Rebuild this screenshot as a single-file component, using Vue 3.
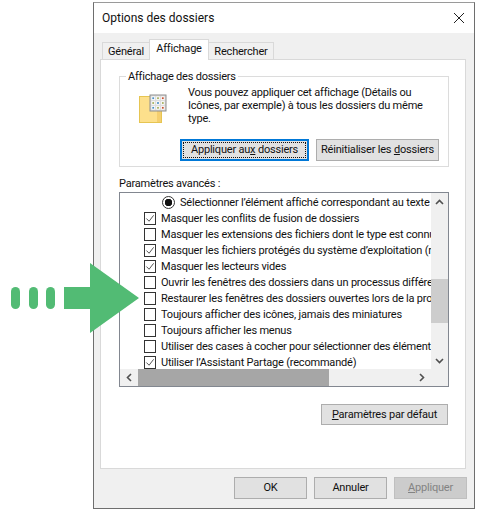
<script setup>
const rows = [
  { kind: 'radio', text: "Sélectionner l’élément affiché correspondant au texte tapé" },
  { checked: true, text: 'Masquer les conflits de fusion de dossiers' },
  { checked: false, text: 'Masquer les extensions des fichiers dont le type est connu' },
  { checked: true, text: 'Masquer les fichiers protégés du système d’exploitation (recommandé)' },
  { checked: true, text: 'Masquer les lecteurs vides' },
  { checked: false, text: 'Ouvrir les fenêtres des dossiers dans un processus différent' },
  { checked: false, text: 'Restaurer les fenêtres des dossiers ouvertes lors de la prochaine ouverture' },
  { checked: false, text: 'Toujours afficher des icônes, jamais des miniatures' },
  { checked: false, text: 'Toujours afficher les menus' },
  { checked: false, text: 'Utiliser des cases à cocher pour sélectionner des éléments' },
  { checked: true, text: 'Utiliser l’Assistant Partage (recommandé)' },
]
const cells = ['#4a90c8', '#a8b060', '#c85030', '#a8b060', '#4a90c8', '#a8b060', '#4a90c8', '#a8b060', '#c85030']
</script>

<template>
  <div class="page">
    <section class="dialog">
      <header class="title">
        <span>Options des dossiers</span>
        <svg class="close" width="12" height="12" viewBox="0 0 12 12"><path d="M1 1l10 10M11 1L1 11" stroke="#222" stroke-width="1" fill="none" /></svg>
      </header>
      <div class="body">
        <nav class="tabs">
          <span class="tab t1">Général</span>
          <span class="tab active">Affichage</span>
          <span class="tab t3">Rechercher</span>
        </nav>
        <div class="panel">
          <fieldset class="group">
            <legend>Affichage des dossiers</legend>
            <div class="group-row">
              <svg class="folder" width="30" height="30" viewBox="0 0 30 30">
                <rect x="1.5" y="2.5" width="22" height="26" fill="#fde08c" stroke="#e6c552" />
                <rect x="19" y="7" width="4" height="21" fill="#f5cf6e" />
                <rect x="12" y="1" width="16" height="16" fill="#ddd" stroke="#8f8f8f" />
                <rect v-for="(c, i) in cells" :key="i" :x="13.5 + (i % 3) * 4.8" :y="2.5 + Math.floor(i / 3) * 4.8" width="3.4" height="3.4" fill="#fff" />
                <rect v-for="(c, i) in cells" :key="'c' + i" :x="14.3 + (i % 3) * 4.8" :y="3.3 + Math.floor(i / 3) * 4.8" width="1.8" height="1.8" :fill="c" />
              </svg>
              <p class="desc">Vous pouvez appliquer cet affichage (Détails ou<br />Icônes, par exemple) à tous les dossiers du même<br />type.</p>
            </div>
            <div class="group-actions">
              <button class="btn focus"><span class="dots">Appliquer au<u>x</u> dossiers</span></button>
              <button class="btn reset">Réinitialiser les <u>d</u>ossiers</button>
            </div>
          </fieldset>
          <div class="adv-label">Paramètres avancés :</div>
          <div class="tree">
            <div class="viewport">
              <div v-for="r in rows" :key="r.text" class="row" :class="{ radio: r.kind === 'radio' }">
                <span v-if="r.kind === 'radio'" class="radio-mark"></span>
                <span v-else class="check">
                  <svg v-if="r.checked" width="11" height="11" viewBox="0 0 11 11"><path d="M1.5 5.5l3 3 5-6.5" stroke="#444" stroke-width="1" fill="none" /></svg>
                </span>
                <span class="label">{{ r.text }}</span>
              </div>
            </div>
            <div class="vbar">
              <svg class="arrow" width="9" height="6" viewBox="0 0 9 6"><path d="M1 5l3.5-3.5L8 5" stroke="#505050" stroke-width="1.6" fill="none" /></svg>
              <div class="vthumb"></div>
              <svg class="arrow low" width="9" height="6" viewBox="0 0 9 6"><path d="M1 1l3.5 3.5L8 1" stroke="#505050" stroke-width="1.6" fill="none" /></svg>
            </div>
            <div class="hbar">
              <svg class="arrow" width="6" height="9" viewBox="0 0 6 9"><path d="M5 1L1.5 4.5 5 8" stroke="#505050" stroke-width="1.6" fill="none" /></svg>
              <div class="htrack"><div class="hthumb"></div></div>
              <svg class="arrow" width="6" height="9" viewBox="0 0 6 9"><path d="M1 1l3.5 3.5L1 8" stroke="#505050" stroke-width="1.6" fill="none" /></svg>
            </div>
            <div class="corner"></div>
          </div>
          <div class="defaults">
            <button class="btn def"><u>P</u>aramètres par défaut</button>
          </div>
        </div>
        <footer class="foot">
          <button class="btn act">OK</button>
          <button class="btn act">Annuler</button>
          <button class="btn act off"><u>A</u>ppliquer</button>
        </footer>
      </div>
    </section>
    <svg class="pointer" width="140" height="70" viewBox="0 0 140 70">
      <rect x="11" y="24" width="9" height="22" rx="4.5" fill="#52bb74" />
      <rect x="29" y="24" width="9" height="22" rx="4.5" fill="#52bb74" />
      <rect x="46" y="24" width="9" height="22" rx="4.5" fill="#52bb74" />
      <path d="M64 24h26V0l49 35-49 35V46H64z" fill="#52bb74" />
    </svg>
  </div>
</template>

<style>
html, body { margin: 0; background: #fff; }
</style>

<style scoped>
.page {
  position: relative;
  width: 483px;
  height: 518px;
  padding: 2px 0 0 93px;
  box-sizing: border-box;
  overflow: hidden;
  background: #fff;
  font: 11px/16px Roboto, "Liberation Sans", Arial, sans-serif;
  letter-spacing: -0.2px;
  color: #111;
}
.dialog {
  width: 382px;
  height: 507px;
  box-sizing: border-box;
  border: 1px solid #6e6e6e;
  border-top-color: #9a9a9a;
  background: #f0f0f0;
  display: flex;
  flex-direction: column;
}
.title {
  height: 30px;
  flex: none;
  background: #fff;
  display: flex;
  align-items: center;
  justify-content: space-between;
  padding: 0 9px 0 8px;
}
.title span { font-size: 12px; letter-spacing: 0; }
.body { flex: 1; padding: 7px 7px 7px 6px; display: flex; flex-direction: column; min-height: 0; }
.tabs { display: flex; height: 20px; padding-left: 2px; align-items: flex-end; position: relative; z-index: 1; margin-bottom: -1px; }
.tab {
  height: 18px;
  box-sizing: border-box;
  background: #f0f0f0;
  border: 1px solid #d9d9d9;
  border-right: none;
  text-align: center;
  line-height: 17px;
}
.t1 { width: 47px; }
.t3 { width: 65px; border-right: 1px solid #d9d9d9; border-left: none; }
.tab.active {
  width: 60px;
  height: 21px;
  background: #fff;
  border-right: 1px solid #d9d9d9;
  border-bottom: none;
  line-height: 18px;
}
.panel {
  width: 366px;
  height: 410px;
  box-sizing: border-box;
  background: #fff;
  border: 1px solid #d9d9d9;
  padding: 8px 17px 0 18px;
  display: flex;
  flex-direction: column;
}
.group {
  margin: 0;
  height: 99px;
  width: 330px;
  box-sizing: border-box;
  border: 1px solid #dcdcdc;
  padding: 0 9px 0 0;
  min-width: 0;
}
.group legend { margin-left: 6px; padding: 2px 2px 0; line-height: 14px; }
.group-row { display: flex; height: 55px; padding-top: 2px; box-sizing: border-box; }
.folder { margin: 8px 0 0 18px; flex: none; }
.desc { margin: 0 0 0 20px; line-height: 13px; white-space: nowrap; }
.group-actions { display: flex; justify-content: flex-end; gap: 7px; }
.btn {
  font: inherit;
  letter-spacing: inherit;
  color: inherit;
  height: 22px;
  box-sizing: border-box;
  background: #e1e1e1;
  border: 1px solid #adadad;
  padding: 0;
  white-space: nowrap;
}
.btn.focus { width: 129px; border: 2px solid #0078d7; padding: 1px; }
.dots { display: block; height: 100%; line-height: 14px; border: 1px dotted #111; box-sizing: border-box; }
.btn.reset { width: 123px; }
.adv-label { margin-top: 9px; line-height: 16px; }
.tree {
  width: 330px;
  height: 195px;
  box-sizing: border-box;
  border: 1px solid #828790;
  display: grid;
  grid-template-columns: 311px 17px;
  grid-template-rows: 176px 17px;
}
.viewport { overflow: hidden; background: #fff; padding-top: 1px; }
.row { height: 16.1px; display: flex; align-items: center; padding-left: 24px; white-space: nowrap; }
.row.radio { padding-left: 42px; }
.check {
  width: 12px;
  height: 13px;
  flex: none;
  box-sizing: border-box;
  border: 1px solid #333;
  background: #fff;
  margin-right: 5px;
  display: flex;
  align-items: center;
  justify-content: center;
}
.radio-mark {
  width: 13px;
  height: 13px;
  flex: none;
  box-sizing: border-box;
  border: 1px solid #333;
  border-radius: 50%;
  background: radial-gradient(circle, #111 3.5px, #fff 4px);
  margin-right: 5px;
}
.label { flex: none; padding-top: 1px; }
.vbar { background: #f0f0f0; display: flex; flex-direction: column; align-items: center; padding: 6px 0 5px; }
.vthumb { width: 17px; height: 44px; background: #cdcdcd; margin-top: 74px; flex: none; }
.arrow.low { margin-top: auto; }
.hbar { background: #f0f0f0; display: flex; align-items: center; padding: 0 6px; }
.htrack { flex: 1; padding: 0 6px; height: 17px; }
.hthumb { width: 191px; height: 17px; background: #a6a6a6; }
.corner { background: #f0f0f0; }
.arrow { flex: none; }
.defaults { display: flex; justify-content: flex-end; margin-top: 17px; }
.btn.def { width: 127px; height: 21px; }
.foot { display: flex; justify-content: flex-end; gap: 7px; padding-top: 8px; padding-right: 0; }
.btn.act { width: 73px; height: 22px; }
.btn.off { color: #838383; background: #ccc; border-color: #bfbfbf; }
.pointer { position: absolute; left: 0; top: 263px; }
</style>
